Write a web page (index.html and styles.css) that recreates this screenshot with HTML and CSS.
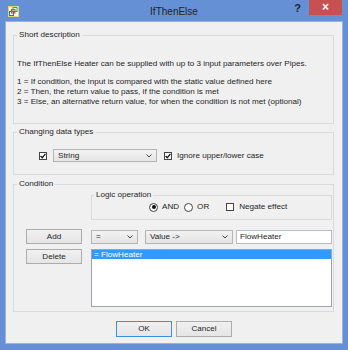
FILE: index.html
```html
<!DOCTYPE html>
<html>
<head>
<meta charset="utf-8">
<link rel="stylesheet" href="styles.css">
</head>
<body>
<div class="window">
  <div class="titlebar">
    <div class="tb-left">
      <svg class="appicon" width="11" height="11" viewBox="0 0 11 11">
        <rect x="0.5" y="0.5" width="10" height="10" fill="#fdfbe8" stroke="#e4d37a"/>
        <rect x="5" y="1.5" width="4" height="4" fill="none" stroke="#3aa23a"/>
        <rect x="3.5" y="3.5" width="3.5" height="3.5" fill="none" stroke="#d84040"/>
        <rect x="1.5" y="5.5" width="4" height="4" fill="none" stroke="#3d63d8"/>
      </svg>
    </div>
    <div class="title">IfThenElse</div>
    <div class="tb-right">
      <span class="help">?</span>
      <span class="close">×</span>
    </div>
  </div>
  <div class="client">
    <fieldset class="group g-desc">
      <legend>Short description</legend>
      <p class="intro">The IfThenElse Heater can be supplied with up to 3 input parameters over Pipes.</p>
      <p class="lines">1 = If condition, the input is compared with the static value defined here<br>2 = Then, the return value to pass, if the condition is met<br>3 = Else, an alternative return value, for when the condition is not met (optional)</p>
    </fieldset>

    <fieldset class="group g-types">
      <legend>Changing data types</legend>
      <div class="types-row">
        <span class="check on"><svg width="6" height="6" viewBox="0 0 6 6"><polyline points="0.6,3 2.3,4.8 5.4,0.8" fill="none" stroke="#111" stroke-width="1.3"/></svg></span>
        <span class="combo c-type"><span class="combo-text">String</span><svg class="chev" width="6" height="4" viewBox="0 0 6 4"><polyline points="0.5,0.5 3,3 5.5,0.5" fill="none" stroke="#444" stroke-width="1"/></svg></span>
        <span class="check on"><svg width="6" height="6" viewBox="0 0 6 6"><polyline points="0.6,3 2.3,4.8 5.4,0.8" fill="none" stroke="#111" stroke-width="1.3"/></svg></span>
        <span class="lbl">Ignore upper/lower case</span>
      </div>
    </fieldset>

    <fieldset class="group g-cond">
      <legend>Condition</legend>
      <div class="cond-grid">
        <fieldset class="group logic">
          <legend>Logic operation</legend>
          <div class="logic-row">
            <span class="radio on"></span><span class="lbl l-and">AND</span>
            <span class="radio"></span><span class="lbl l-or">OR</span>
            <span class="check"></span><span class="lbl">Negate effect</span>
          </div>
        </fieldset>
        <span class="btn b-add">Add</span>
        <div class="expr-row">
          <span class="combo c-op"><span class="combo-text">=</span><svg class="chev" width="6" height="4" viewBox="0 0 6 4"><polyline points="0.5,0.5 3,3 5.5,0.5" fill="none" stroke="#444" stroke-width="1"/></svg></span>
          <span class="combo c-val"><span class="combo-text">Value -&gt;</span><svg class="chev" width="6" height="4" viewBox="0 0 6 4"><polyline points="0.5,0.5 3,3 5.5,0.5" fill="none" stroke="#444" stroke-width="1"/></svg></span>
          <span class="textbox">FlowHeater</span>
        </div>
        <span class="btn b-del">Delete</span>
        <div class="listbox">
          <div class="item sel">= FlowHeater</div>
        </div>
      </div>
    </fieldset>

    <div class="footer">
      <span class="btn b-ok">OK</span>
      <span class="btn">Cancel</span>
    </div>
  </div>
</div>
</body>
</html>
```

FILE: styles.css
```css
* { box-sizing: border-box; }
html, body { margin: 0; padding: 0; }
body {
  width: 348px;
  height: 350px;
  overflow: hidden;
  background: #6590d5;
  font-family: "Liberation Sans", Arial, sans-serif;
  font-size: 8.1px;
  color: #1e1e1e;
}
.window {
  width: 348px;
  height: 350px;
  display: flex;
  flex-direction: column;
}
.titlebar {
  height: 21px;
  display: grid;
  grid-template-columns: 1fr auto 1fr;
  align-items: start;
}
.tb-left { padding: 6px 0 0 8px; display: flex; }
.appicon { display: block; }
.title {
  margin-top: 6px;
  font-size: 10px;
  line-height: 12px;
  color: #222;
}
.tb-right {
  display: flex;
  justify-content: flex-end;
  align-items: flex-start;
  padding-right: 6px;
}
.help {
  margin-top: 2px;
  margin-right: 8px;
  font-size: 11px;
  line-height: 12px;
  font-weight: bold;
  color: #1c2433;
}
.close {
  width: 33px;
  height: 15px;
  background: #c75050;
  color: #fff;
  font-size: 12px;
  line-height: 15px;
  font-weight: bold;
  text-align: center;
}
.client {
  flex: 1;
  margin: 0 5px 6px 5px;
  border: 1px solid #9ab1dc;
  background: #f0f0f0;
  padding-top: 8px;
}
.group {
  border: 1px solid #dadada;
  margin: 0 8px 0 7px;
  padding: 0 3px;
  min-width: 0;
}
.group legend {
  padding: 0 2px;
  margin: 0;
  line-height: 10px;
  font-size: 8.1px;
  color: #1e1e1e;
}
.g-desc { padding-top: 19px; padding-bottom: 16px; }
.g-desc p { margin: 0; line-height: 10px; white-space: nowrap; }
.g-desc .intro { margin-bottom: 8px; }

.g-types { margin-top: 3px; padding-top: 12px; padding-bottom: 12px; }
.types-row {
  display: flex;
  align-items: center;
  height: 13px;
  margin-left: 22px;
}
.check {
  width: 8px;
  height: 8px;
  border: 1px solid #444;
  background: #fff;
  display: flex;
  align-items: center;
  justify-content: center;
  flex: none;
}
.check svg { display: block; }
.lbl { line-height: 10px; white-space: nowrap; }
.combo {
  height: 13px;
  border: 1px solid #b5b5b5;
  background: linear-gradient(#f2f2f2, #e4e4e4);
  display: flex;
  align-items: center;
  padding: 0 4px 0 4px;
  flex: none;
}
.combo-text { flex: 1; line-height: 10px; white-space: nowrap; }
.chev { display: block; flex: none; }
.c-type { width: 104px; margin: 0 7px 0 6px; }
.types-row .lbl { margin-left: 5px; }

.g-cond { margin-top: 4px; padding-top: 1px; padding-bottom: 4px; padding-right: 1px; }
.cond-grid {
  display: grid;
  grid-template-columns: 56px 241px;
  column-gap: 9px;
  row-gap: 5px;
  margin-left: 9px;
  align-items: start;
}
.logic {
  grid-column: 2;
  margin: 0 0 4px 0;
  padding: 2px 0 7px 0;
}
.logic legend { margin-left: 2px; }
.logic-row {
  display: flex;
  align-items: center;
  height: 10px;
  padding-left: 57px;
}
.radio {
  width: 9px;
  height: 9px;
  border: 1px solid #444;
  border-radius: 50%;
  background: #fff;
  display: flex;
  align-items: center;
  justify-content: center;
  flex: none;
}
.radio.on::after {
  content: "";
  width: 4px;
  height: 4px;
  border-radius: 50%;
  background: #111;
}
.logic-row .lbl { margin-left: 4px; }
.logic-row .l-and { margin-right: 5px; }
.logic-row .l-or { margin-right: 17px; }
.logic-row .check + .lbl { margin-left: 5px; }

.btn {
  height: 15px;
  width: 56px;
  border: 1px solid #acacac;
  background: linear-gradient(#f0f0f0, #e5e5e5);
  display: flex;
  align-items: center;
  justify-content: center;
  line-height: 10px;
}
.expr-row {
  display: flex;
  margin-top: 1px;
}
.c-op { width: 47px; margin-right: 7px; height: 14px; }
.c-val { width: 88px; margin-right: 3px; height: 14px; }
.textbox {
  width: 97px;
  height: 14px;
  border: 1px solid #b8bcc4;
  background: #fff;
  display: flex;
  align-items: center;
  padding-left: 3px;
  line-height: 10px;
}
.listbox {
  height: 58px;
  border: 1px solid #9ea3ab;
  background: #fff;
}
.item {
  height: 9px;
  line-height: 9px;
  padding-left: 2px;
  white-space: nowrap;
}
.item.sel { background: #3399ff; color: #fff; }

.footer {
  margin-top: 9px;
  display: flex;
  justify-content: center;
  gap: 4px;
}
.footer .btn { height: 16px; }
.b-ok { border-color: #3c8ee0; }
```
